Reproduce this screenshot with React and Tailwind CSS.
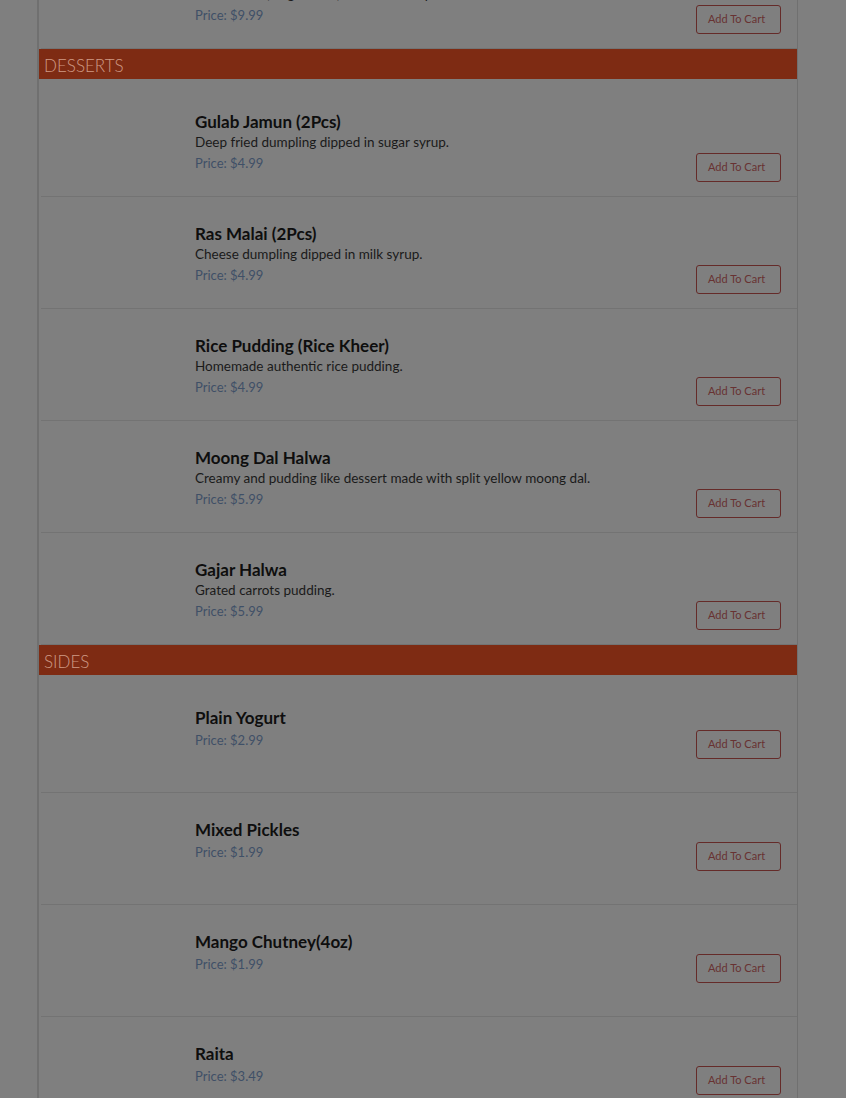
const sections = [
  {
    name: 'DESSERTS',
    items: [
      { title: 'Gulab Jamun (2Pcs)', desc: 'Deep fried dumpling dipped in sugar syrup.', price: '4.99' },
      { title: 'Ras Malai (2Pcs)', desc: 'Cheese dumpling dipped in milk syrup.', price: '4.99' },
      { title: 'Rice Pudding (Rice Kheer)', desc: 'Homemade authentic rice pudding.', price: '4.99' },
      { title: 'Moong Dal Halwa', desc: 'Creamy and pudding like dessert made with split yellow moong dal.', price: '5.99' },
      { title: 'Gajar Halwa', desc: 'Grated carrots pudding.', price: '5.99' },
    ],
  },
  {
    name: 'SIDES',
    items: [
      { title: 'Plain Yogurt', price: '2.99' },
      { title: 'Mixed Pickles', price: '1.99' },
      { title: 'Mango Chutney(4oz)', price: '1.99' },
      { title: 'Raita', price: '3.49' },
    ],
  },
]

function MenuItem({ item }) {
  return (
    <div className="flex h-[112px] border-b border-[#737373] ml-[2px]">
      {/* image slot, empty under the overlay */}
      <div className="w-[154px] shrink-0" />
      <div className="flex-1 pt-[26px] pr-[16px]">
        <h3 className="text-[17px] leading-[21px] font-bold text-[#0e0e0e]">{item.title}</h3>
        {item.desc ? (
          <p className="text-[13.5px] leading-[21px] text-[#1a1a1a]">{item.desc}</p>
        ) : (
          <div className="h-[2px]" />
        )}
        <div className="flex items-start justify-between">
          <span className="text-[13px] leading-[21px] text-[#3f5067]">Price: ${item.price}</span>
          <button className="h-[29px] w-[85px] rounded-[3px] border border-[#652b29] text-left pl-[11px] text-[11px] text-[#683232]">
            Add To Cart
          </button>
        </div>
      </div>
    </div>
  )
}

export default function App() {
  return (
    <div className="h-[1098px] overflow-hidden bg-[#7f7f7f] font-['Lato','Liberation_Sans',sans-serif]">
      <div className="ml-[37px] w-[761px] border-l-2 border-r border-[#707070] -mt-[63px]">
        <MenuItem item={{ title: 'Vegetable Biryani', desc: 'Basmati rice, vegetables, cooked with spices.', price: '9.99' }} />
        {sections.map((s) => (
          <div key={s.name}>
            <div className="h-[30px] bg-[#7e2b13] pl-[5px] pt-[6px] text-[17px] leading-[22px] font-light text-[#cf9a85]">
              {s.name}
            </div>
            <div className="pt-[6px]">
              {s.items.map((it) => (
                <MenuItem key={it.title} item={it} />
              ))}
            </div>
          </div>
        ))}
      </div>
    </div>
  )
}
